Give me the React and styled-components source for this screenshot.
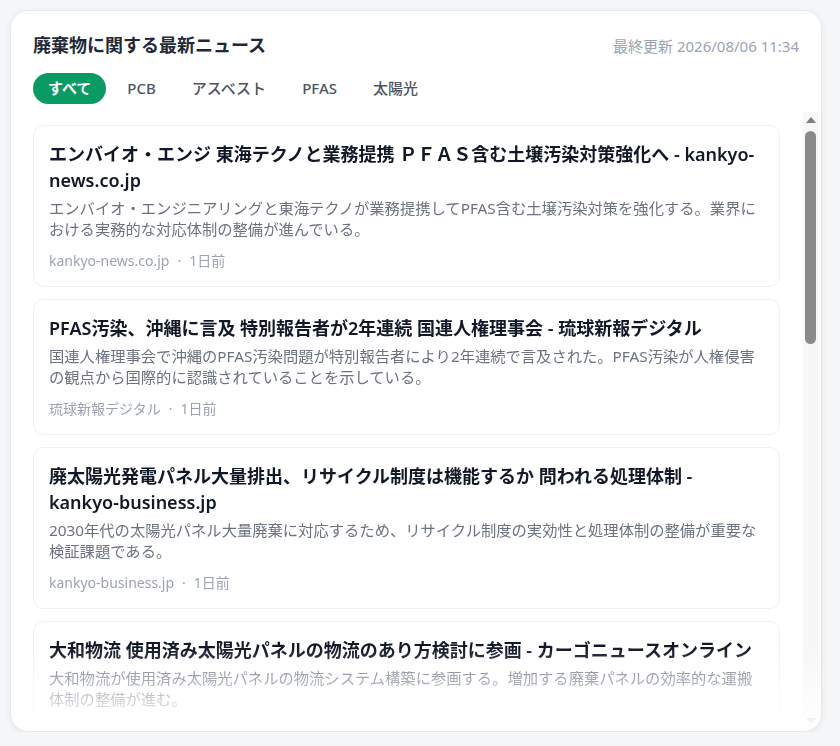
import React, { useState } from 'react';
import styled, { createGlobalStyle } from 'styled-components';

const TABS = ['すべて', 'PCB', 'アスベスト', 'PFAS', '太陽光'];

const NEWS = [
  {
    id: 1,
    title:
      'エンバイオ・エンジ 東海テクノと業務提携 ＰＦＡＳ含む土壌汚染対策強化へ - kankyo-news.co.jp',
    summary:
      'エンバイオ・エンジニアリングと東海テクノが業務提携してPFAS含む土壌汚染対策を強化する。業界における実務的な対応体制の整備が進んでいる。',
    source: 'kankyo-news.co.jp',
    ago: '1日前',
  },
  {
    id: 2,
    title: 'PFAS汚染、沖縄に言及 特別報告者が2年連続 国連人権理事会 - 琉球新報デジタル',
    summary:
      '国連人権理事会で沖縄のPFAS汚染問題が特別報告者により2年連続で言及された。PFAS汚染が人権侵害の観点から国際的に認識されていることを示している。',
    source: '琉球新報デジタル',
    ago: '1日前',
  },
  {
    id: 3,
    title:
      '廃太陽光発電パネル大量排出、リサイクル制度は機能するか 問われる処理体制 - kankyo-business.jp',
    summary:
      '2030年代の太陽光パネル大量廃棄に対応するため、リサイクル制度の実効性と処理体制の整備が重要な検証課題である。',
    source: 'kankyo-business.jp',
    ago: '1日前',
  },
  {
    id: 4,
    title: '大和物流 使用済み太陽光パネルの物流のあり方検討に参画 - カーゴニュースオンライン',
    summary:
      '大和物流が使用済み太陽光パネルの物流システム構築に参画する。増加する廃棄パネルの効率的な運搬体制の整備が進む。',
    source: 'カーゴニュースオンライン',
    ago: '2日前',
  },
  {
    id: 5,
    title: 'PCB廃棄物の処分期限迫る 未処理機器の掘り起こし調査を強化 - 日刊工業新聞',
    summary:
      '高濃度PCB廃棄物の処分期限を前に、自治体が未処理機器の掘り起こし調査を強化している。事業者への周知が課題となっている。',
    source: '日刊工業新聞',
    ago: '2日前',
  },
  {
    id: 6,
    title: 'アスベスト事前調査の報告義務 違反件数が増加 環境省 - 環境ビジネス',
    summary:
      '解体工事におけるアスベスト事前調査の報告義務違反が増加している。環境省は監督体制の強化と指導の徹底を進める方針だ。',
    source: '環境ビジネス',
    ago: '3日前',
  },
  {
    id: 7,
    title: '産業廃棄物の不適正処理 県が立入検査を実施 - 地方新聞',
    summary:
      '県は産業廃棄物の不適正処理の疑いがある事業所に立入検査を実施した。改善命令を含めた行政処分を検討している。',
    source: '地方新聞',
    ago: '3日前',
  },
  {
    id: 8,
    title: 'PFAS水質基準の見直し 水道事業者に対応求める - 水道産業新聞',
    summary:
      '水道水中のPFASに関する基準見直しが進められ、水道事業者には検査体制の拡充と浄水処理の改善が求められている。',
    source: '水道産業新聞',
    ago: '4日前',
  },
  {
    id: 9,
    title: '太陽光パネルのリユース市場 拡大へ 業界団体が指針策定 - 電気新聞',
    summary:
      '使用済み太陽光パネルのリユースを促進するため、業界団体が品質評価の指針を策定した。市場の信頼性向上が期待される。',
    source: '電気新聞',
    ago: '5日前',
  },
];

export default function App() {
  const [tab, setTab] = useState(TABS[0]);

  return (
    <>
      <GlobalStyle />
      <Panel>
        <Header>
          <Title>廃棄物に関する最新ニュース</Title>
          <Updated>最終更新 2026/08/06 11:34</Updated>
        </Header>
        <Tabs>
          {TABS.map((name) => (
            <Tab
              key={name}
              type="button"
              $active={name === tab}
              onClick={() => setTab(name)}
            >
              {name}
            </Tab>
          ))}
        </Tabs>
        <ListFrame>
          <NewsList>
            {NEWS.map((item) => (
              <NewsCard key={item.id}>
                <NewsTitle>{item.title}</NewsTitle>
                <Summary>{item.summary}</Summary>
                <Meta>
                  {item.source}
                  <Dot>·</Dot>
                  {item.ago}
                </Meta>
              </NewsCard>
            ))}
          </NewsList>
          {/* classic scrollbar look, the native one is hidden */}
          <ScrollTrack aria-hidden="true">
            <Arrow $dir="up" />
            <Thumb />
            <Arrow $dir="down" />
          </ScrollTrack>
        </ListFrame>
      </Panel>
    </>
  );
}

const GlobalStyle = createGlobalStyle`
  body {
    margin: 0;
    background: #f4f6f8;
    font-family: "Noto Sans", "Noto Sans CJK JP", sans-serif;
  }
`;

const Panel = styled.section`
  box-sizing: border-box;
  margin: 10px 18px 0 10px;
  height: 722px;
  display: flex;
  flex-direction: column;
  padding: 21px 22px 3px 22px;
  background: #fff;
  border: 1px solid #e3e7ee;
  border-radius: 18px;
  box-shadow: 0 2px 6px rgba(15, 23, 42, 0.06);
`;

const Header = styled.header`
  display: flex;
  justify-content: space-between;
  align-items: center;
`;

const Title = styled.h2`
  margin: 0;
  font-size: 18px;
  line-height: 26px;
  font-weight: 700;
  color: #1f2937;
`;

const Updated = styled.span`
  font-size: 15px;
  color: #9ca3b4;
`;

const Tabs = styled.nav`
  display: flex;
  gap: 6px;
  margin: 15px 0 8px;
`;

const Tab = styled.button`
  padding: 5px 15px;
  border: none;
  border-radius: 999px;
  font-family: inherit;
  font-size: 15px;
  line-height: 21px;
  font-weight: ${({ $active }) => ($active ? 700 : 500)};
  cursor: pointer;
  background: ${({ $active }) => ($active ? '#0a9a63' : 'transparent')};
  color: ${({ $active }) => ($active ? '#fff' : '#4b5563')};
`;

const ListFrame = styled.div`
  flex: 1;
  min-height: 0;
  display: flex;
  margin-right: -19px;
  mask-image: linear-gradient(to bottom, #000 calc(100% - 80px), transparent 100%);
`;

const NewsList = styled.div`
  flex: 1;
  min-width: 0;
  overflow-y: auto;
  scrollbar-width: none;
  padding: 13px 23px 0 0;
  display: flex;
  flex-direction: column;
  gap: 12px;
`;

const ScrollTrack = styled.div`
  width: 15px;
  flex-shrink: 0;
  display: flex;
  flex-direction: column;
  align-items: center;
  background: #f7f7f7;
`;

const Arrow = styled.span`
  width: 0;
  height: 0;
  border-left: 5px solid transparent;
  border-right: 5px solid transparent;
  ${({ $dir }) =>
    $dir === 'up'
      ? 'border-bottom: 6px solid #808080; margin: 5px 0 8px;'
      : 'border-top: 6px solid #808080; margin: auto 0 4px;'}
`;

const Thumb = styled.span`
  width: 11px;
  height: 213px;
  border-radius: 6px;
  background: #8a8a8a;
`;

const NewsCard = styled.article`
  flex-shrink: 0;
  padding: 15px 16px 15px 15px;
  background: #fff;
  border: 1px solid #edf0f5;
  border-radius: 10px;
`;

const NewsTitle = styled.h3`
  margin: 0;
  font-size: 18px;
  line-height: 26px;
  font-weight: 600;
  color: #111827;
`;

const Summary = styled.p`
  margin: 5px 0 0;
  font-size: 15.3px;
  line-height: 21px;
  color: #6b7280;
`;

const Meta = styled.div`
  margin-top: 11px;
  font-size: 14px;
  line-height: 20px;
  color: #9ca3af;
`;

const Dot = styled.span`
  margin: 0 8px;
`;
